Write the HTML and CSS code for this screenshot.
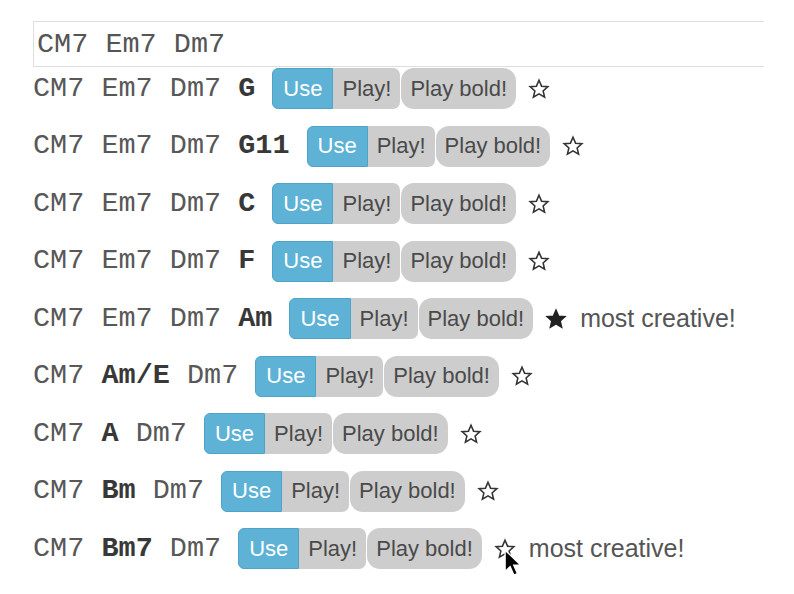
FILE: index.html
```html
<!DOCTYPE html>
<html>
<head>
<meta charset="utf-8">
<link rel="stylesheet" href="styles.css">
</head>
<body>
<div class="page">
  <div class="input">CM7 Em7 Dm7</div>
  <div class="list">
    <div class="row"><span class="chords">CM7 Em7 Dm7 <b>G</b></span><div class="btns"><span class="btn use">Use</span><span class="btn play">Play!</span><span class="btn bold">Play bold!</span></div><span class="star"><svg viewBox="0 0 24 24"><path d="M12 2.5l2.8 6.4 6.9.6-5.2 4.6 1.6 6.8L12 17.3l-6.1 3.6 1.6-6.8-5.2-4.6 6.9-.6z"/></svg></span></div>
    <div class="row"><span class="chords">CM7 Em7 Dm7 <b>G11</b></span><div class="btns"><span class="btn use">Use</span><span class="btn play">Play!</span><span class="btn bold">Play bold!</span></div><span class="star"><svg viewBox="0 0 24 24"><path d="M12 2.5l2.8 6.4 6.9.6-5.2 4.6 1.6 6.8L12 17.3l-6.1 3.6 1.6-6.8-5.2-4.6 6.9-.6z"/></svg></span></div>
    <div class="row"><span class="chords">CM7 Em7 Dm7 <b>C</b></span><div class="btns"><span class="btn use">Use</span><span class="btn play">Play!</span><span class="btn bold">Play bold!</span></div><span class="star"><svg viewBox="0 0 24 24"><path d="M12 2.5l2.8 6.4 6.9.6-5.2 4.6 1.6 6.8L12 17.3l-6.1 3.6 1.6-6.8-5.2-4.6 6.9-.6z"/></svg></span></div>
    <div class="row"><span class="chords">CM7 Em7 Dm7 <b>F</b></span><div class="btns"><span class="btn use">Use</span><span class="btn play">Play!</span><span class="btn bold">Play bold!</span></div><span class="star"><svg viewBox="0 0 24 24"><path d="M12 2.5l2.8 6.4 6.9.6-5.2 4.6 1.6 6.8L12 17.3l-6.1 3.6 1.6-6.8-5.2-4.6 6.9-.6z"/></svg></span></div>
    <div class="row"><span class="chords">CM7 Em7 Dm7 <b>Am</b></span><div class="btns"><span class="btn use">Use</span><span class="btn play">Play!</span><span class="btn bold">Play bold!</span></div><span class="star filled"><svg viewBox="0 0 24 24"><path d="M12 2.5l2.8 6.4 6.9.6-5.2 4.6 1.6 6.8L12 17.3l-6.1 3.6 1.6-6.8-5.2-4.6 6.9-.6z"/></svg></span><span class="note">most creative!</span></div>
    <div class="row"><span class="chords">CM7 <b>Am/E</b> Dm7</span><div class="btns"><span class="btn use">Use</span><span class="btn play">Play!</span><span class="btn bold">Play bold!</span></div><span class="star"><svg viewBox="0 0 24 24"><path d="M12 2.5l2.8 6.4 6.9.6-5.2 4.6 1.6 6.8L12 17.3l-6.1 3.6 1.6-6.8-5.2-4.6 6.9-.6z"/></svg></span></div>
    <div class="row"><span class="chords">CM7 <b>A</b> Dm7</span><div class="btns"><span class="btn use">Use</span><span class="btn play">Play!</span><span class="btn bold">Play bold!</span></div><span class="star"><svg viewBox="0 0 24 24"><path d="M12 2.5l2.8 6.4 6.9.6-5.2 4.6 1.6 6.8L12 17.3l-6.1 3.6 1.6-6.8-5.2-4.6 6.9-.6z"/></svg></span></div>
    <div class="row"><span class="chords">CM7 <b>Bm</b> Dm7</span><div class="btns"><span class="btn use">Use</span><span class="btn play">Play!</span><span class="btn bold">Play bold!</span></div><span class="star"><svg viewBox="0 0 24 24"><path d="M12 2.5l2.8 6.4 6.9.6-5.2 4.6 1.6 6.8L12 17.3l-6.1 3.6 1.6-6.8-5.2-4.6 6.9-.6z"/></svg></span></div>
    <div class="row"><span class="chords">CM7 <b>Bm7</b> Dm7</span><div class="btns"><span class="btn use">Use</span><span class="btn play">Play!</span><span class="btn bold">Play bold!</span></div><span class="star"><svg viewBox="0 0 24 24"><path d="M12 2.5l2.8 6.4 6.9.6-5.2 4.6 1.6 6.8L12 17.3l-6.1 3.6 1.6-6.8-5.2-4.6 6.9-.6z"/></svg><svg class="cursor" viewBox="0 0 17 25"><path d="M1 1v19l4.5-4.3 3.3 7.6 3.2-1.4-3.3-7.4H15z"/></svg></span><span class="note">most creative!</span></div>
  </div>
</div>
</body>
</html>
```

FILE: styles.css
```css
html, body {
  margin: 0;
  padding: 0;
  background: #fff;
}

.page {
  padding: 21px 0 0 33px;
  font-family: "Liberation Mono", monospace;
}

.input {
  box-sizing: border-box;
  width: 731px;
  height: 46px;
  border: 1px solid #dedede;
  border-right: none;
  padding-left: 3px;
  display: flex;
  align-items: center;
  font-size: 28.5px;
  color: #555;
  white-space: pre;
}

.list {
  margin-top: -7px;
  display: grid;
  grid-auto-rows: 57.5px;
}

.row {
  display: flex;
  align-items: center;
}

.chords {
  font-size: 28.5px;
  line-height: 32px;
  color: #585858;
  white-space: pre;
}

.chords b {
  color: #383838;
  font-weight: bold;
}

.btns {
  display: flex;
  margin-left: 17px;
  font-family: "Liberation Sans", Arial, sans-serif;
  font-size: 22px;
}

.btn {
  box-sizing: border-box;
  height: 41px;
  display: flex;
  align-items: center;
  padding: 0 9px;
  color: #4a4a4a;
  background: #cdcdcd;
}

.use {
  padding: 0 10px;
  background: #5db2d6;
  color: #fff;
  border: 1px solid #4ea3c8;
  border-radius: 6px 0 0 6px;
}

.play {
  border-radius: 0 7px 7px 0;
}

.bold {
  margin-left: 1px;
  border-radius: 13px;
}

.star {
  position: relative;
  width: 22px;
  height: 22px;
  margin-left: 12px;
}

.star svg {
  display: block;
  width: 22px;
  height: 22px;
  fill: none;
  stroke: #333;
  stroke-width: 1.7;
  stroke-linejoin: miter;
}

.star.filled svg {
  fill: #222;
  stroke: #222;
}

.star .cursor {
  position: absolute;
  left: 10px;
  top: 11px;
  width: 19px;
  height: 28px;
  fill: #000;
  stroke: #fff;
  stroke-width: 1.2;
}

.note {
  margin-left: 13px;
  font-family: "Liberation Sans", Arial, sans-serif;
  font-size: 25px;
  color: #555;
}
```
